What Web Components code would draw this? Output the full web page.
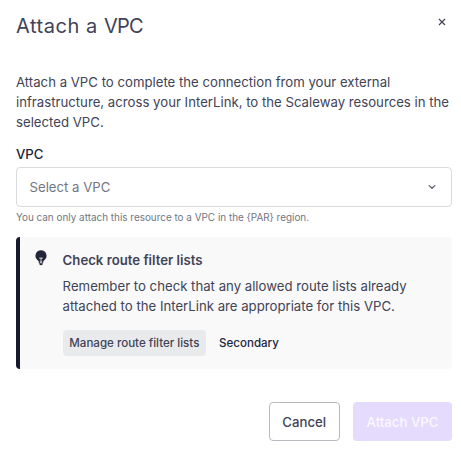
<!DOCTYPE html>
<html lang="en"><head><meta charset="utf-8"><title>Attach a VPC</title>
<style>body{margin:0;background:#fff;font-family:Inter,sans-serif;color:#414356}</style></head><body>
<vpc-dialog></vpc-dialog>
<script>
const define=(name,html)=>{const t=document.createElement('template');t.innerHTML=html;
customElements.define(name,class extends HTMLElement{constructor(){super();this.attachShadow({mode:'open'}).append(t.content.cloneNode(true));}});};
define('vpc-button',`<style>
:host{display:inline-flex;box-sizing:border-box;height:39px;align-items:center;justify-content:center;border-radius:4px;font-size:13.2px;line-height:20px;font-weight:500;color:#414356;white-space:nowrap}
:host([kind=outline]){width:71.5px;border:1px solid #b9bac0}
:host([kind=primary]){width:99px;background:#e5dbfd;color:#faf8ff}
:host([kind=soft]){height:26px;width:143.5px;background:#e9eaeb;font-size:11.55px}
:host([kind=ghost]){height:26px;font-size:11.55px;color:#222638}
</style><slot></slot>`);
define('vpc-select',`<style>
:host{display:flex;flex:none;box-sizing:border-box;height:40px;border:1px solid #d9dadd;border-radius:4px;align-items:center;justify-content:space-between;padding:0 15px 0 12.5px;font-size:13.2px;color:#727683}
svg{display:block}</style><slot></slot><svg width="8" height="6" viewBox="0 0 8 6"><path d="M1.2 1.6 4 4.3 6.8 1.6" fill="none" stroke="#5b5d70" stroke-width="1.3" stroke-linecap="round" stroke-linejoin="round"/></svg>`);
define('vpc-notice',`<style>
:host{display:flex;flex:none;box-sizing:border-box;height:132px;background:#f9f9fa;border-left:4px solid #151a2d;border-radius:4px;padding:13px 12px 13px 14px}
svg{display:block;flex:none;width:14px;height:16px;margin-right:14.6px}
.title{font-size:13.2px;line-height:20px;font-weight:600}
.text{font-size:13.2px;line-height:20px;margin-top:6px;white-space:nowrap}
.row{display:flex;gap:13px;margin-top:14px}
</style><svg viewBox="0 0 14 16"><path fill="#222638" d="M7 .3a5.5 5.5 0 0 0-3.3 9.9c.5.4.8.8 1 1.3h4.6c.2-.5.5-.9 1-1.3A5.5 5.5 0 0 0 7 .3Z"/><path fill="none" stroke="#f9f9fa" stroke-width=".8" d="M5.2 8.1h3.6M7 8.1v3.4"/><path fill="none" stroke="#222638" d="M5.3 11v2.2h3.4V11"/><path fill="#222638" d="M5.6 13.7h2.8v1.4H5.6z"/></svg>
<div><div class="title"><slot name="title"></slot></div><div class="text"><slot></slot></div><div class="row"><slot name="actions"></slot></div></div>`);
define('vpc-dialog',`<style>
:host{display:flex;flex-direction:column;box-sizing:border-box;width:461px;height:450px;padding:10px 9px 9px 16px}
header{display:flex;justify-content:space-between;height:32px}
h1{margin:0;font-size:20px;line-height:33px;font-weight:380;letter-spacing:.55px;color:#414356}
.tight{letter-spacing:-.8px}
header svg{display:block;margin:8px 6px 0 0}
p{margin:30px 0 0;font-size:13.2px;line-height:20px;white-space:nowrap}
label{font-size:13.2px;line-height:20px;font-weight:500;margin:12px 0 3px;color:#222638}
small{font-size:9.92px;line-height:16px;color:#727683;margin:2px 0 12px}
footer{display:flex;justify-content:flex-end;gap:13px;margin-top:33px}
</style>
<header><h1>Attach a <span class="tight">VPC</span></h1><svg width="8" height="8" viewBox="0 0 8 8"><path d="m1 1 6 6M7 1 1 7" stroke="#414356" stroke-width="1.2"/></svg></header>
<p>Attach a VPC to complete the connection from your external<br>infrastructure, across your InterLink, to the Scaleway resources in the<br>selected VPC.</p>
<label>VPC</label><vpc-select>Select a VPC</vpc-select><small>You can only attach this resource to a VPC in the {PAR} region.</small>
<vpc-notice><span slot="title">Check route filter lists</span>Remember to check that any allowed route lists already<br>attached to the InterLink are appropriate for this VPC.<vpc-button slot="actions" kind="soft">Manage route filter lists</vpc-button><vpc-button slot="actions" kind="ghost">Secondary</vpc-button></vpc-notice>
<footer><vpc-button kind="outline">Cancel</vpc-button><vpc-button kind="primary">Attach VPC</vpc-button></footer>`);
</script></body></html>
